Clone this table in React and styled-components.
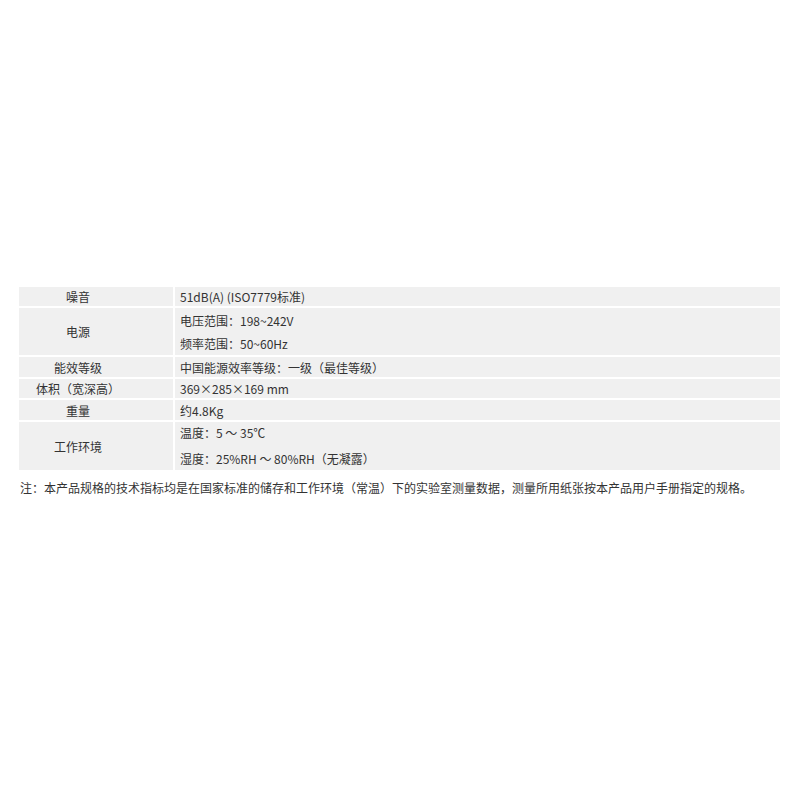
import React from 'react';
import styled, { createGlobalStyle } from 'styled-components';

const GlobalStyle = createGlobalStyle`
  body {
    margin: 0;
    background: #fff;
    font-family: "Noto Sans CJK SC", "Liberation Sans", sans-serif;
    color: #333;
  }
`;

const Page = styled.div`
  padding: 287px 20px 0 19px;
`;

const SpecGrid = styled.div`
  display: grid;
  grid-template-columns: 154px 1fr;
  gap: 2px;
  font-size: 12px;
`;

const Label = styled.div`
  background: #f0f0f0;
  display: flex;
  align-items: center;
  justify-content: center;
  padding-right: 36px;
  min-height: ${(p) => p.h}px;
`;

const Value = styled.div`
  background: #f0f0f0;
  display: flex;
  flex-direction: column;
  justify-content: center;
  gap: ${(p) => p.gap || 0}px;
  padding-left: 5px;
  min-height: ${(p) => p.h}px;
`;

const Line = styled.div`
  line-height: ${(p) => p.lh || 19}px;
  white-space: nowrap;
`;

const Note = styled.div`
  margin-top: 10px;
  font-size: 12px;
  line-height: 16px;
  padding-left: 1px;
  white-space: nowrap;
`;

const rows = [
  { label: '噪音', h: 19, lines: ['51dB(A) (ISO7779标准)'] },
  { label: '电源', h: 47, lh: 23, lines: ['电压范围：198~242V', '频率范围：50~60Hz'] },
  { label: '能效等级', h: 20, lines: ['中国能源效率等级：一级（最佳等级）'] },
  { label: '体积（宽深高）', h: 19, lines: ['369×285×169 mm'] },
  { label: '重量', h: 20, lines: ['约4.8Kg'] },
  {
    label: '工作环境',
    h: 48,
    lh: 22,
    gap: 4,
    lines: ['温度：5 ～ 35℃', '湿度：25%RH ～ 80%RH（无凝露）'],
  },
];

const App = () => {
  return (
    <Page>
      <GlobalStyle />
      <SpecGrid>
        {rows.map((r) => (
          <React.Fragment key={r.label}>
            <Label h={r.h}>{r.label}</Label>
            <Value h={r.h} gap={r.gap}>
              {r.lines.map((l) => (
                <Line key={l} lh={r.lh}>
                  {l}
                </Line>
              ))}
            </Value>
          </React.Fragment>
        ))}
      </SpecGrid>
      <Note>
        注：本产品规格的技术指标均是在国家标准的储存和工作环境（常温）下的实验室测量数据，测量所用纸张按本产品用户手册指定的规格。
      </Note>
    </Page>
  );
};

export default App;
